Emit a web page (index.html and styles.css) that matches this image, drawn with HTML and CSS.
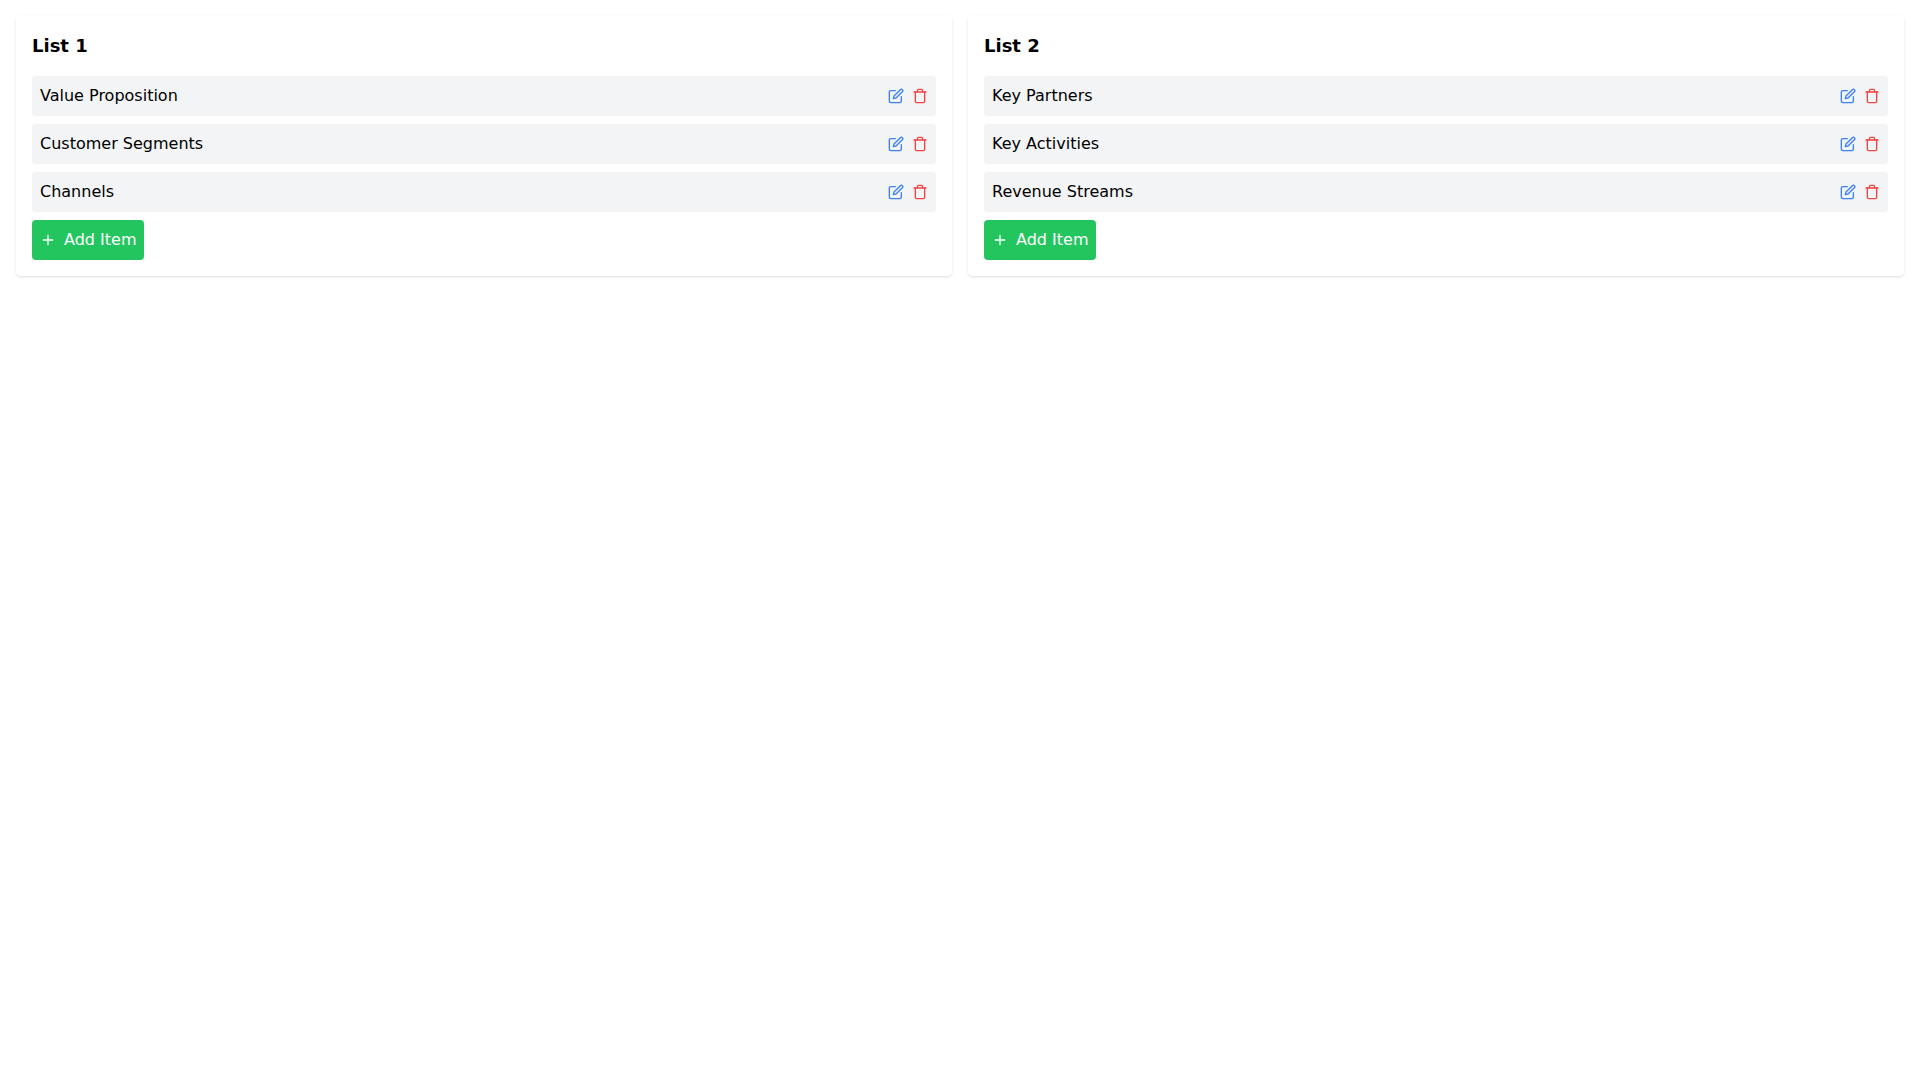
FILE: index.html
```html
<!DOCTYPE html>
<html lang="en">
<head>
<meta charset="utf-8">
<title>Lists</title>
<link rel="stylesheet" href="styles.css">
</head>
<body>
<svg class="defs" width="0" height="0" aria-hidden="true">
  <symbol id="edit" viewBox="0 0 24 24"><path d="M11 4H4a2 2 0 0 0-2 2v14a2 2 0 0 0 2 2h14a2 2 0 0 0 2-2v-7"/><path d="M18.500 2.500a2.121 2.121 0 0 1 3 3L12 15l-4 1 1-4 9.500-9.500z"/></symbol>
  <symbol id="trash" viewBox="0 0 24 24"><path d="M3 6h18"/><path d="M19 6v14a2 2 0 0 1-2 2H7a2 2 0 0 1-2-2V6m3 0V4a2 2 0 0 1 2-2h4a2 2 0 0 1 2 2v2"/></symbol>
  <symbol id="plus" viewBox="0 0 24 24"><path d="M12 5v14M5 12h14"/></symbol>
</svg>
<main class="board">
  <section class="card">
    <h2 class="title">List 1</h2>
    <ul class="items">
      <li class="item"><span>Value Proposition</span><div class="actions"><svg class="icon blue"><use href="#edit"/></svg><svg class="icon red"><use href="#trash"/></svg></div></li>
      <li class="item"><span>Customer Segments</span><div class="actions"><svg class="icon blue"><use href="#edit"/></svg><svg class="icon red"><use href="#trash"/></svg></div></li>
      <li class="item"><span>Channels</span><div class="actions"><svg class="icon blue"><use href="#edit"/></svg><svg class="icon red"><use href="#trash"/></svg></div></li>
    </ul>
    <button class="add"><svg class="plus"><use href="#plus"/></svg>Add Item</button>
  </section>
  <section class="card">
    <h2 class="title">List 2</h2>
    <ul class="items">
      <li class="item"><span>Key Partners</span><div class="actions"><svg class="icon blue"><use href="#edit"/></svg><svg class="icon red"><use href="#trash"/></svg></div></li>
      <li class="item"><span>Key Activities</span><div class="actions"><svg class="icon blue"><use href="#edit"/></svg><svg class="icon red"><use href="#trash"/></svg></div></li>
      <li class="item"><span>Revenue Streams</span><div class="actions"><svg class="icon blue"><use href="#edit"/></svg><svg class="icon red"><use href="#trash"/></svg></div></li>
    </ul>
    <button class="add"><svg class="plus"><use href="#plus"/></svg>Add Item</button>
  </section>
</main>
</body>
</html>
```
FILE: styles.css
```css
* { box-sizing: border-box; }
html, body { margin: 0; background: #fff; }
body { font-family: "DejaVu Sans", sans-serif; font-size: 16px; line-height: 24px; color: #000; }
.defs { position: absolute; }
.board { display: grid; grid-template-columns: 1fr 1fr; gap: 16px; padding: 16px; align-items: start; }
.card { background: #fff; border-radius: 4px; padding: 16px; box-shadow: 0 1px 3px rgba(0,0,0,.1), 0 1px 2px -1px rgba(0,0,0,.1); }
.title { margin: 0 0 16px; font-size: 18px; line-height: 28px; font-weight: 700; }
.items { list-style: none; margin: 0; padding: 0; }
.item { display: flex; justify-content: space-between; align-items: center; height: 40px; margin-bottom: 8px; padding: 8px; background: #f3f4f6; border-radius: 4px; }
.actions { display: flex; gap: 8px; }
.icon { width: 16px; height: 16px; fill: none; stroke-width: 2; stroke-linecap: round; stroke-linejoin: round; display: block; }
.blue { stroke: #3b82f6; }
.red { stroke: #ef4444; }
.add { display: flex; align-items: center; height: 40px; margin: 0; padding: 8px; border: 0; border-radius: 4px; background: #22c55e; color: #fff; font: inherit; }
.plus { width: 16px; height: 16px; margin-right: 8px; fill: none; stroke: #fff; stroke-width: 2; stroke-linecap: round; }
```
